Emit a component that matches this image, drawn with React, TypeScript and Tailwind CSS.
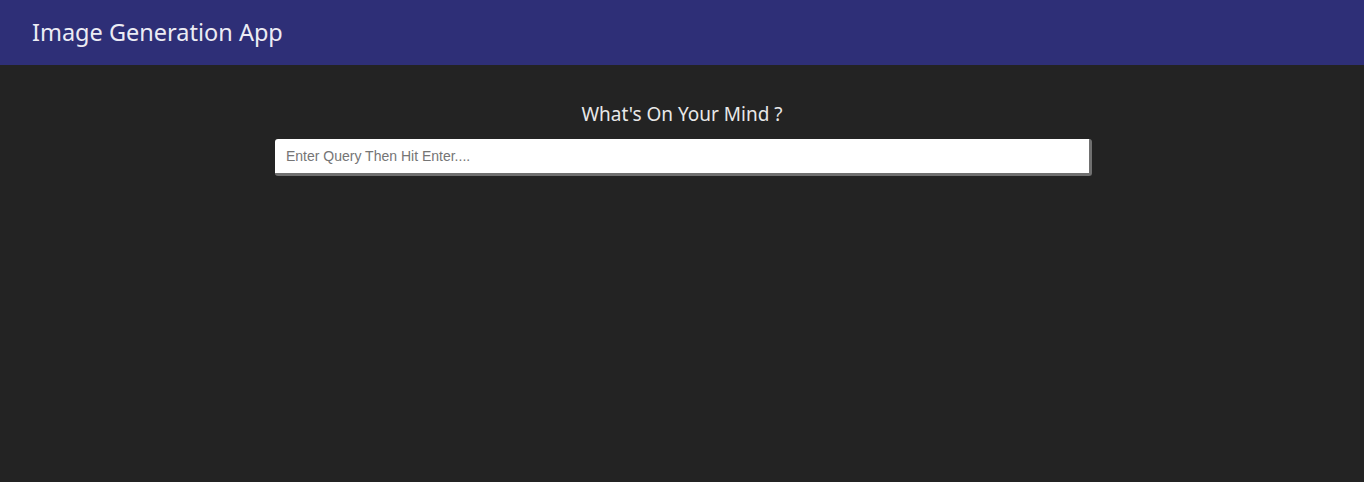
export default function App() {
  return (
    <div className="min-h-[482px] bg-[#232323] font-['Noto_Sans',sans-serif]">
      <header className="flex h-[65px] items-center bg-[#2e2f77] px-8">
        <h1 className="text-[23.5px] text-[#ececf4]">Image Generation App</h1>
      </header>
      <main className="flex flex-col items-center pt-[35px]">
        <h2 className="text-[19px] text-[#e8e8e8]">What's On Your Mind ?</h2>
        <input
          className="mt-[10px] ml-[3px] h-[37px] w-[817px] rounded-[3px] border-r-[3px] border-b-[3px] border-[#707070] bg-white px-[11px] font-['Liberation_Sans',sans-serif] text-[14px] text-[#333] outline-none placeholder:text-[#757575]"
          placeholder="Enter Query Then Hit Enter...."
        />
      </main>
    </div>
  );
}
